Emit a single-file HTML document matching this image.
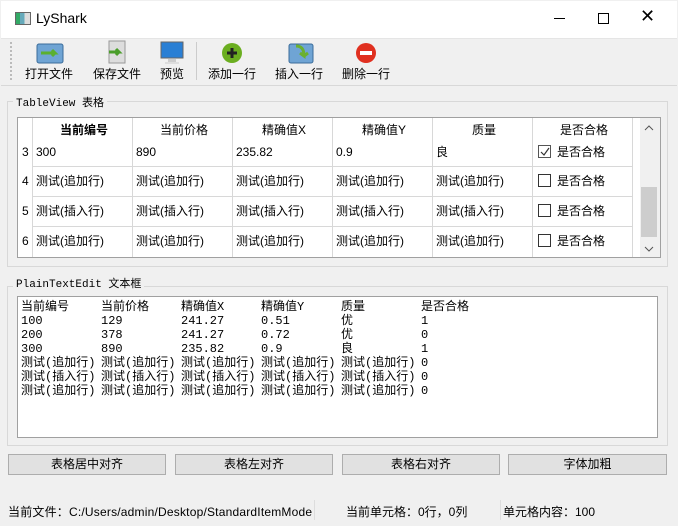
<!DOCTYPE html>
<html><head><meta charset="utf-8"><style>
*{margin:0;padding:0;box-sizing:border-box}
body{width:678px;height:526px;background:#f0f0f0;font-family:"Liberation Sans","Microsoft YaHei","Noto Sans CJK SC",sans-serif;font-size:12px;color:#000;position:relative;overflow:hidden}
.abs{position:absolute}
.title{left:1px;top:1px;width:676px;height:37px;background:#fff}
.tb{text-align:center;font-size:12px;top:65px}
.grp{border:1px solid #d8d8d8;}
.gl{background:#f0f0f0;font-family:"Liberation Mono","Noto Sans CJK SC",monospace;font-size:11px;padding:0 3px}
.cell{position:absolute;height:30px;line-height:30px;padding-left:4px;white-space:nowrap;font-size:12px}
.hline{position:absolute;height:1px;background:#d8d8d8}
.vline{position:absolute;width:1px;background:#d8d8d8}
.cb{display:inline-block;width:13px;height:13px;border:1px solid #333;vertical-align:-2px;margin-right:6px;background:#fff;position:relative}
.btn{position:absolute;top:454px;height:21px;background:#e1e1e1;border:1px solid #adadad;text-align:center;line-height:19px;font-size:12px}
.pt{position:absolute;font-family:"Liberation Mono","Noto Sans CJK SC",monospace;font-size:12px;line-height:14px;white-space:nowrap}
</style></head><body>
<div class="abs title"></div>
<div class="abs" style="left:15px;top:12px;width:16px;height:13px;border:1px solid #666;background:linear-gradient(90deg,#3a6 0 30%,#6ab 30% 60%,#ddd 60%)"></div>
<div class="abs" style="left:36px;top:10px;font-size:14px">LyShark</div>
<div class="abs" style="left:554px;top:18px;width:11px;height:1px;background:#000"></div>
<div class="abs" style="left:598px;top:13px;width:11px;height:11px;border:1px solid #000"></div>
<div class="abs" style="left:640px;top:6px;font-size:18px;line-height:20px">✕</div>
<div class="abs" style="left:1px;top:38px;width:676px;height:1px;background:#e5e5e5"></div>
<div class="abs" style="left:10px;top:42px;width:2px;height:38px;border-left:2px dotted #bbb"></div>
<svg class="abs" style="left:36px;top:40px" width="28" height="24"><rect x="1" y="4" width="26" height="19" rx="2" fill="#6fa4d4" stroke="#3b6c9a"/><path d="M5 13h14l-3-3M19 13l-3 3" stroke="#5bb030" stroke-width="3" fill="none"/></svg>
<svg class="abs" style="left:105px;top:40px" width="24" height="26"><rect x="4" y="1" width="16" height="22" fill="#ddd" stroke="#999"/><path d="M4 12h10l-3-3M14 12l-3 3" stroke="#4a9e2a" stroke-width="3" fill="none"/></svg>
<svg class="abs" style="left:160px;top:40px" width="24" height="26"><rect x="1" y="2" width="22" height="16" fill="#2a7fd4" stroke="#666"/><rect x="8" y="19" width="8" height="3" fill="#ccc"/><rect x="5" y="22" width="14" height="2" fill="#ddd"/></svg>
<div class="abs" style="left:196px;top:42px;width:1px;height:38px;background:#ccc"></div>
<svg class="abs" style="left:221px;top:42px" width="22" height="22"><circle cx="11" cy="11" r="10" fill="#6bae20"/><path d="M11 6v10M6 11h10" stroke="#222" stroke-width="3"/></svg>
<svg class="abs" style="left:288px;top:40px" width="26" height="24"><rect x="1" y="4" width="24" height="19" rx="2" fill="#6fa4d4" stroke="#3b6c9a"/><path d="M8 6c6 0 8 4 8 10l-4-3M16 16l4-3" stroke="#6bb030" stroke-width="3" fill="none"/></svg>
<svg class="abs" style="left:355px;top:42px" width="22" height="22"><circle cx="11" cy="11" r="10" fill="#e03020"/><rect x="5" y="9" width="12" height="4" fill="#fff"/></svg>
<div class="abs tb" style="left:25px">打开文件</div>
<div class="abs tb" style="left:93px">保存文件</div>
<div class="abs tb" style="left:160px">预览</div>
<div class="abs tb" style="left:208px">添加一行</div>
<div class="abs tb" style="left:275px">插入一行</div>
<div class="abs tb" style="left:342px">删除一行</div>
<div class="abs" style="left:1px;top:85px;width:676px;height:1px;background:#d8d8d8"></div>
<div class="abs grp" style="left:7px;top:101px;width:661px;height:166px"></div>
<div class="abs gl" style="left:13px;top:94px">TableView 表格</div>
<div class="abs" style="left:17px;top:117px;width:644px;height:141px;background:#fff;border:1px solid #a0a0a0;overflow:hidden">
 <div class="vline" style="left:14px;top:0;height:140px"></div>
 <div class="vline" style="left:114px;top:0;height:140px"></div>
 <div class="vline" style="left:214px;top:0;height:140px"></div>
 <div class="vline" style="left:314px;top:0;height:140px"></div>
 <div class="vline" style="left:414px;top:0;height:140px"></div>
 <div class="vline" style="left:514px;top:0;height:140px"></div>
 <div class="vline" style="left:614px;top:0;height:140px"></div>
 <div class="hline" style="left:14px;top:48px;width:600px"></div>
 <div class="hline" style="left:14px;top:78px;width:600px"></div>
 <div class="hline" style="left:14px;top:108px;width:600px"></div>
 <div class="cell" style="left:14px;top:-3px;width:100px;text-align:center;font-weight:bold">当前编号</div>
 <div class="cell" style="left:114px;top:-3px;width:100px;text-align:center">当前价格</div>
 <div class="cell" style="left:214px;top:-3px;width:100px;text-align:center">精确值X</div>
 <div class="cell" style="left:314px;top:-3px;width:100px;text-align:center">精确值Y</div>
 <div class="cell" style="left:414px;top:-3px;width:100px;text-align:center">质量</div>
 <div class="cell" style="left:514px;top:-3px;width:100px;text-align:center">是否合格</div>
 <div class="cell" style="left:0;top:19px">3</div><div class="cell" style="left:14px;top:19px">300</div><div class="cell" style="left:114px;top:19px">890</div><div class="cell" style="left:214px;top:19px">235.82</div><div class="cell" style="left:314px;top:19px">0.9</div><div class="cell" style="left:414px;top:19px">良</div><div class="cell" style="left:516px;top:19px"><span class="cb" style="border-color:#555"><svg class="abs" style="left:1px;top:1px" width="10" height="10"><path d="M1 5l3 3 5-7" stroke="#333" fill="none" stroke-width="1.2"/></svg></span>是否合格</div>
 <div class="cell" style="left:0;top:48px">4</div><div class="cell" style="left:14px;top:48px">测试(追加行)</div><div class="cell" style="left:114px;top:48px">测试(追加行)</div><div class="cell" style="left:214px;top:48px">测试(追加行)</div><div class="cell" style="left:314px;top:48px">测试(追加行)</div><div class="cell" style="left:414px;top:48px">测试(追加行)</div><div class="cell" style="left:516px;top:48px"><span class="cb"></span>是否合格</div>
 <div class="cell" style="left:0;top:78px">5</div><div class="cell" style="left:14px;top:78px">测试(插入行)</div><div class="cell" style="left:114px;top:78px">测试(插入行)</div><div class="cell" style="left:214px;top:78px">测试(插入行)</div><div class="cell" style="left:314px;top:78px">测试(插入行)</div><div class="cell" style="left:414px;top:78px">测试(插入行)</div><div class="cell" style="left:516px;top:78px"><span class="cb"></span>是否合格</div>
 <div class="cell" style="left:0;top:108px">6</div><div class="cell" style="left:14px;top:108px">测试(追加行)</div><div class="cell" style="left:114px;top:108px">测试(追加行)</div><div class="cell" style="left:214px;top:108px">测试(追加行)</div><div class="cell" style="left:314px;top:108px">测试(追加行)</div><div class="cell" style="left:414px;top:108px">测试(追加行)</div><div class="cell" style="left:516px;top:108px"><span class="cb"></span>是否合格</div>
 <div class="abs" style="left:622px;top:0;width:20px;height:140px;background:#f0f0f0"></div>
 <div class="abs" style="left:623px;top:69px;width:16px;height:50px;background:#cdcdcd"></div>
 <svg class="abs" style="left:626px;top:7px" width="10" height="6"><path d="M1 5l4-4 4 4" stroke="#555" fill="none"/></svg>
 <svg class="abs" style="left:626px;top:128px" width="10" height="6"><path d="M1 1l4 4 4-4" stroke="#555" fill="none"/></svg>
</div>
<div class="abs grp" style="left:7px;top:286px;width:661px;height:160px"></div>
<div class="abs gl" style="left:13px;top:275px">PlainTextEdit 文本框</div>
<div class="abs" style="left:17px;top:296px;width:641px;height:142px;background:#fff;border:1px solid #a0a0a0"></div>
<div class="pt" style="left:21px;top:300px">当前编号<br>100<br>200<br>300<br>测试(追加行)<br>测试(插入行)<br>测试(追加行)</div>
<div class="pt" style="left:101px;top:300px">当前价格<br>129<br>378<br>890<br>测试(追加行)<br>测试(插入行)<br>测试(追加行)</div>
<div class="pt" style="left:181px;top:300px">精确值X<br>241.27<br>241.27<br>235.82<br>测试(追加行)<br>测试(插入行)<br>测试(追加行)</div>
<div class="pt" style="left:261px;top:300px">精确值Y<br>0.51<br>0.72<br>0.9<br>测试(追加行)<br>测试(插入行)<br>测试(追加行)</div>
<div class="pt" style="left:341px;top:300px">质量<br>优<br>优<br>良<br>测试(追加行)<br>测试(插入行)<br>测试(追加行)</div>
<div class="pt" style="left:421px;top:300px">是否合格<br>1<br>0<br>1<br>0<br>0<br>0</div>
<div class="btn" style="left:8px;width:158px">表格居中对齐</div>
<div class="btn" style="left:175px;width:158px">表格左对齐</div>
<div class="btn" style="left:342px;width:158px">表格右对齐</div>
<div class="btn" style="left:508px;width:159px">字体加粗</div>
<div class="abs" style="left:8px;top:503px;width:304px;overflow:hidden;white-space:nowrap;letter-spacing:0.2px">当前文件：C:/Users/admin/Desktop/StandardItemModel</div>
<div class="abs" style="left:314px;top:500px;width:1px;height:20px;background:#ddd"></div>
<div class="abs" style="left:346px;top:503px">当前单元格：0行，0列</div>
<div class="abs" style="left:500px;top:500px;width:1px;height:20px;background:#ddd"></div>
<div class="abs" style="left:503px;top:503px">单元格内容：100</div>
</body></html>
